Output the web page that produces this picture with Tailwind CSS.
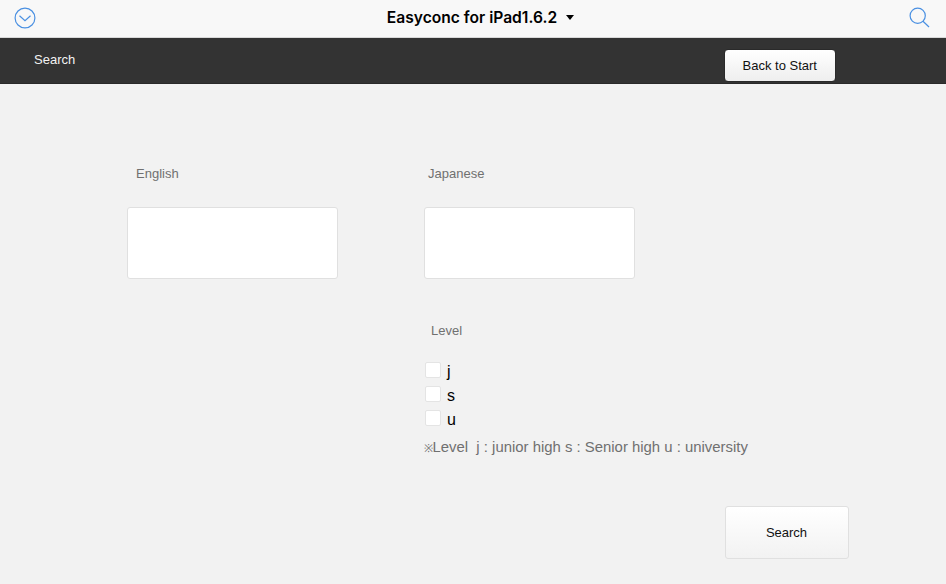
<!DOCTYPE html>
<html lang="en">
<head>
    <meta charset="UTF-8">
    <title>Easyconc for iPad</title>
    <script src="https://cdn.jsdelivr.net/npm/@tailwindcss/browser@4"></script>
</head>
<body class="w-[946px] h-[584px] overflow-hidden bg-[#f2f2f2] font-['Liberation_Sans',sans-serif]">
    <!-- top bar -->
    <div class="h-[38px] bg-[#f8f8f8] border-b border-[#d9d9d9] flex items-center justify-between pl-[14px] pr-[16px]">
        <svg class="w-[22px] h-[22px] -mt-[2px]" viewBox="0 0 22 22" fill="none" stroke="#4a90e2" stroke-width="1.2">
            <circle cx="11" cy="11" r="9.9"/>
            <path d="M5.5 8.8 L11 13.6 L16.5 8.8"/>
        </svg>
        <div class="flex items-center gap-[9px] ml-[16px] -mt-[2px] font-['Inter',sans-serif] font-semibold text-[15.6px] text-black">
            <span>Easyconc for iPad1.6.2</span>
            <span class="w-0 h-0 border-x-[4px] border-x-transparent border-t-[5px] border-t-black"></span>
        </div>
        <svg class="w-[21px] h-[21px] -mt-[3px]" viewBox="0 0 21 21" fill="none" stroke="#4a90e2" stroke-width="1.2">
            <circle cx="8.7" cy="8.7" r="7.6"/>
            <path d="M14 14.2 L20 20"/>
        </svg>
    </div>

    <!-- dark bar -->
    <div class="h-[46px] bg-[#333333] border-b border-[#2a2a2a] flex items-start justify-between pl-[34px] pr-[110px]">
        <span class="mt-[14px] text-[13px] leading-[16px] text-[#f2f2f2]">Search</span>
        <button class="mt-[11px] w-[112.5px] h-[33px] rounded-[4px] border border-[#2a2a2a] bg-gradient-to-b from-white to-[#eeeeee] text-[13px] text-[#111]">Back to Start</button>
    </div>

    <!-- form -->
    <div class="flex pl-[126.5px] pt-[82px]">
        <div class="w-[297px]">
            <div class="pl-[9.5px] text-[13px] leading-[16px] text-[#707070]">English</div>
            <input type="text" class="block mt-[25px] w-[211.5px] h-[72px] bg-white border border-[#e0e0e0] rounded-[3px]">
        </div>
        <div class="w-[395px]">
            <div class="pl-[4.5px] text-[13px] leading-[16px] text-[#707070]">Japanese</div>
            <input type="text" class="block mt-[25px] w-[211.5px] h-[72px] bg-white border border-[#e0e0e0] rounded-[3px]">

            <div class="pl-[7.5px] mt-[44px] text-[13px] leading-[16px] text-[#707070]">Level</div>
            <div class="mt-[23px] pl-[1px] flex flex-col gap-[8px] text-[16px] leading-[16px] text-black">
                <div class="flex items-center gap-[6.5px]"><span class="w-[16px] h-[16px] bg-white border border-[#e4e4e4] rounded-[2px]"></span><span class="relative top-[2px]">j</span></div>
                <div class="flex items-center gap-[6.5px]"><span class="w-[16px] h-[16px] bg-white border border-[#e4e4e4] rounded-[2px]"></span><span class="relative top-[2px]">s</span></div>
                <div class="flex items-center gap-[6.5px]"><span class="w-[16px] h-[16px] bg-white border border-[#e4e4e4] rounded-[2px]"></span><span class="relative top-[2px]">u</span></div>
            </div>
            <div class="mt-[12px] text-[14.9px] leading-[18px] text-[#707070] whitespace-pre"><span class="text-[11px]">※</span>Level  j : junior high s : Senior high u : university</div>
            <div class="mt-[49px] pl-[301px]">
                <button class="w-[124px] h-[53px] rounded-[3px] border border-[#e0e0e0] bg-gradient-to-b from-white to-[#f2f2f2] text-[13px] text-[#111]">Search</button>
            </div>
        </div>
    </div>
</body>
</html>
